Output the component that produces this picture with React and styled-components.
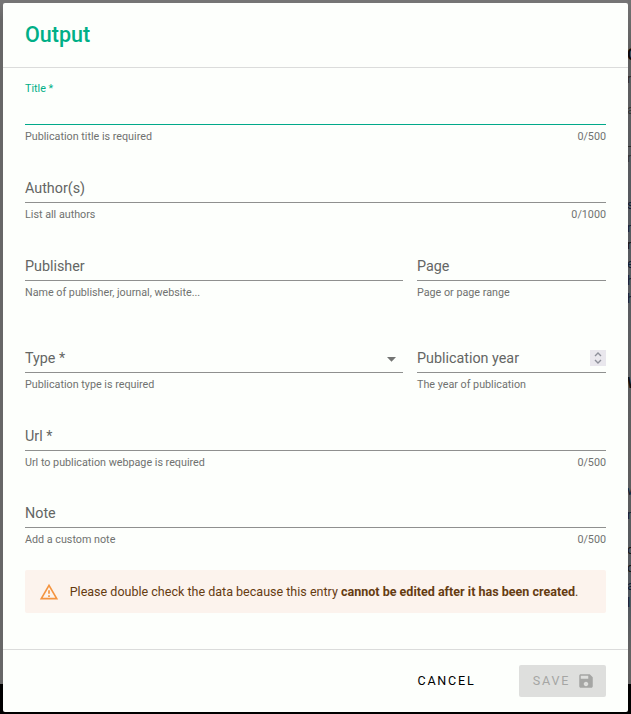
import React from 'react';
import styled, { createGlobalStyle } from 'styled-components';

const GlobalStyle = createGlobalStyle`
  *, *::before, *::after { box-sizing: border-box; }
  html, body, #root { height: 100%; }
  body {
    margin: 0;
    overflow: hidden;
    background: #000;
    font-family: Roboto, "Liberation Sans", sans-serif;
  }
`;

const Screen = styled.div`
  position: relative;
  width: 631px;
  height: 714px;
  padding: 3px 3px 2px;
  overflow: hidden;
  background: linear-gradient(#757575 0 3px, #676767 20px 684px, #000 684px);
`;

const PageEdge = styled.div`
  position: absolute;
  top: 0;
  right: 0;
  width: 3px;
  height: 684px;
  overflow: hidden;
  background: linear-gradient(#737373, #5f5f5f 50px, #55595f 215px, #5b5d60 330px, #5e5e5e 470px, #50575e 600px, #626262 650px);
`;

const Sliver = styled.span`
  position: absolute;
  left: ${(p) => p.$x ?? -1}px;
  top: ${(p) => p.$y - 10}px;
  font-size: ${(p) => p.$size ?? 13}px;
  line-height: 20px;
  font-weight: ${(p) => (p.$bold ? 700 : 400)};
  color: ${(p) => p.$color ?? '#101d33'};
`;

const EdgeRule = styled.div`
  height: 1px;
  margin-top: 146px;
  background: #2c2c2c;
`;

const Dialog = styled.form`
  position: relative;
  display: flex;
  flex-direction: column;
  width: 625px;
  height: 709px;
  border-radius: 2px;
  background: #fdfffc;
`;

const Header = styled.header`
  height: 65px;
  padding: 16px 22px 0;
  border-bottom: 1px solid #dbdcdb;
`;

const Heading = styled.h2`
  margin: 0;
  font-size: 21.5px;
  line-height: 32px;
  font-weight: 500;
  color: #00af87;
`;

const Body = styled.div`
  flex: 1;
  padding: 13px 22px 0;
`;

const Row = styled.div`
  display: grid;
  grid-template-columns: ${(p) => (p.$split ? '378px 189px' : '1fr')};
  column-gap: 14px;
  height: ${(p) => p.$height ?? 78}px;
`;

const Control = styled.div`
  display: flex;
  justify-content: space-between;
  height: 44px;
  border-bottom: 1px solid ${(p) => (p.$active ? '#00a98a' : '#8f908f')};
`;

const Label = styled.label`
  padding-top: ${(p) => (p.$active ? 1 : 19)}px;
  font-size: ${(p) => (p.$active ? 10.75 : 14.33)}px;
  line-height: ${(p) => (p.$active ? 14 : 20)}px;
  color: ${(p) => (p.$active ? '#00af87' : '#646664')};
`;

const Helper = styled.div`
  display: flex;
  justify-content: space-between;
  margin-top: 4px;
  font-size: 10.75px;
  line-height: 15px;
  color: #707270;
`;

const Caret = styled.svg`
  width: 9px;
  height: 5px;
  margin: 28px 7px 0 0;
  fill: #737473;
`;

const Stepper = styled.span`
  display: grid;
  place-items: center;
  width: 16px;
  height: 16px;
  margin-top: 21px;
  background: #e9e7ed;
  svg { width: 8px; height: 12px; fill: none; stroke: #8d8f99; stroke-width: 1.4; }
`;

const Notice = styled.div`
  display: flex;
  align-items: center;
  height: 43px;
  padding-left: 14px;
  border-radius: 2px;
  background: #fcf3ed;
  color: #663c12;
  font-size: 12.54px;
  line-height: 18px;
  svg { width: 20px; height: 20px; margin-right: 10.7px; fill: #f49440; }
  strong { font-weight: 700; }
`;

const Footer = styled.footer`
  display: flex;
  justify-content: flex-end;
  height: 63px;
  padding: 15px 22px 0;
  border-top: 1px solid #dbdcdb;
`;

const Button = styled.button`
  display: flex;
  align-items: center;
  justify-content: center;
  width: ${(p) => p.$width}px;
  height: 32px;
  margin-left: 29.5px;
  padding: 0 0 0 2px;
  border: 0;
  border-radius: 2px;
  background: ${(p) => (p.disabled ? '#dedfdd' : 'transparent')};
  color: ${(p) => (p.disabled ? '#a5a6a4' : '#000')};
  font: 400 12.54px/20px Roboto, sans-serif;
  letter-spacing: 1.8px;
  svg { width: 18px; height: 18px; margin: 0 -1px 0 7px; fill: currentColor; }
`;

const edgeText = [
  { t: 'C', y: 55, $bold: true, $size: 16, $color: '#080808' },
  { t: 'r', y: 79, $color: '#302b29' },
  { t: 'a', y: 110, $color: '#353535' },
  { t: 'r', y: 158, $color: '#353535' },
  { t: 's', y: 205 },
  { t: 'n', y: 228 },
  { t: 'r', y: 245, $color: '#141414' },
  { t: 'e', y: 264 },
  { t: 'h', y: 281 },
  { t: 'h', y: 299 },
  { t: 'W', y: 383, $size: 15, $bold: true, $color: '#101010' },
  { t: 'w', y: 491 },
  { t: 'n', y: 515 },
  { t: 'c', y: 550, $color: '#151515' },
  { t: 'c', y: 568, $color: '#151515' },
  { t: 'a', y: 586 },
  { t: 'l', y: 603 },
];

function Field({ label, hint, count, active, children }) {
  return (
    <div>
      <Control $active={active}>
        <Label $active={active}>{label}</Label>
        {children}
      </Control>
      <Helper>
        <span>{hint}</span>
        {count && <span>{count}</span>}
      </Helper>
    </div>
  );
}

export default function App() {
  return (
    <Screen>
      <GlobalStyle />
      <PageEdge aria-hidden="true">
        <EdgeRule />
        {edgeText.map(({ t, y, ...style }) => (
          <Sliver key={y} $y={y} {...style}>{t}</Sliver>
        ))}
      </PageEdge>
      <Dialog>
        <Header>
          <Heading>Output</Heading>
        </Header>
        <Body>
          <Row>
            <Field label="Title *" hint="Publication title is required" count="0/500" active />
          </Row>
          <Row>
            <Field label="Author(s)" hint="List all authors" count="0/1000" />
          </Row>
          <Row $split $height={92}>
            <Field label="Publisher" hint="Name of publisher, journal, website..." />
            <Field label="Page" hint="Page or page range" />
          </Row>
          <Row $split>
            <Field label="Type *" hint="Publication type is required">
              <Caret viewBox="0 0 9 5"><path d="M0 0h9L4.5 4.7z" /></Caret>
            </Field>
            <Field label="Publication year" hint="The year of publication">
              <Stepper>
                <svg viewBox="0 0 8 12"><path d="M1 4l3-3 3 3M1 8l3 3 3-3" /></svg>
              </Stepper>
            </Field>
          </Row>
          <Row $height={77}>
            <Field label="Url *" hint="Url to publication webpage is required" count="0/500" />
          </Row>
          <Row $height={86}>
            <Field label="Note" hint="Add a custom note" count="0/500" />
          </Row>
          <Notice>
            <svg viewBox="0 0 24 24">
              <path d="M12 5.99L19.53 19H4.47L12 5.99M12 2L1 21h22L12 2zm1 14h-2v2h2v-2zm0-6h-2v4h2v-4z" />
            </svg>
            <span>
              Please double check the data because this entry <strong>cannot be edited after it has been created</strong>.
            </span>
          </Notice>
        </Body>
        <Footer>
          <Button type="button" $width={88}>CANCEL</Button>
          <Button type="button" $width={87} disabled>
            SAVE
            <svg viewBox="0 0 24 24">
              <path d="M17 3H5c-1.11 0-2 .9-2 2v14c0 1.1.89 2 2 2h14c1.1 0 2-.9 2-2V7l-4-4zm-5 16c-1.66 0-3-1.34-3-3s1.34-3 3-3 3 1.34 3 3-1.34 3-3 3zm3-10H5V5h10v4z" />
            </svg>
          </Button>
        </Footer>
      </Dialog>
    </Screen>
  );
}
